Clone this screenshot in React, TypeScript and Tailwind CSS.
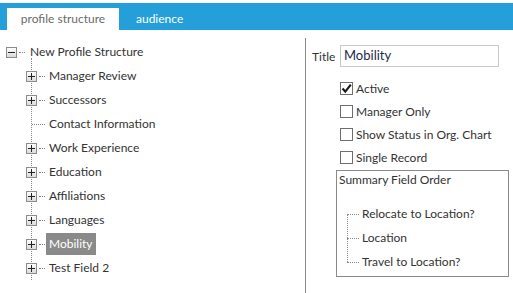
import React from "react";

type Node = { label: string; expandable: boolean; selected?: boolean };

const CHILDREN: Node[] = [
  { label: "Manager Review", expandable: true },
  { label: "Successors", expandable: true },
  { label: "Contact Information", expandable: false },
  { label: "Work Experience", expandable: true },
  { label: "Education", expandable: true },
  { label: "Affiliations", expandable: true },
  { label: "Languages", expandable: true },
  { label: "Mobility", expandable: true, selected: true },
  { label: "Test Field 2", expandable: true },
];

const OPTIONS = [
  { label: "Active", checked: true },
  { label: "Manager Only", checked: false },
  { label: "Show Status in Org. Chart", checked: false },
  { label: "Single Record", checked: false },
];

const SUMMARY = ["Relocate to Location?", "Location", "Travel to Location?"];

function ToggleBox({ open }: { open?: boolean }) {
  return (
    <span className="flex h-[11px] w-[11px] shrink-0 items-center justify-center border border-[#8c8c8c] bg-gradient-to-b from-white to-[#d9d9d9]">
      <svg width="7" height="7" viewBox="0 0 7 7">
        <rect x="0" y="3" width="7" height="1" fill="#222" />
        {!open && <rect x="3" y="0" width="1" height="7" fill="#222" />}
      </svg>
    </span>
  );
}

function Checkbox({ checked }: { checked: boolean }) {
  return (
    <span className="flex h-[13px] w-[13px] shrink-0 items-center justify-center border border-[#6e6e6e] bg-white">
      {checked && (
        <svg width="11" height="11" viewBox="0 0 11 11">
          <path d="M1.5 5.5 L4.3 8.6 L9.8 1.6" fill="none" stroke="#1a1a1a" strokeWidth="2.2" />
        </svg>
      )}
    </span>
  );
}

export default function App() {
  return (
    <div
      className="h-[293px] w-[513px] overflow-hidden bg-white text-[12px] text-[#333]"
      style={{ fontFamily: "Lato, 'Noto Sans', sans-serif" }}
    >
      {/* Tabs */}
      <div className="mt-[3px] flex h-[27px] items-end bg-[#259fd9] pl-[7px]">
        <div className="flex h-[22px] w-[112px] items-center justify-center bg-white text-[#6b6b6b]">
          profile structure
        </div>
        <div className="flex h-[22px] items-center pl-[17px] text-white">audience</div>
      </div>

      <div className="flex">
        {/* Tree */}
        <div className="w-[305px] pt-[10px]">
          <div className="flex h-6 items-center pl-[6px]">
            <ToggleBox open />
            <span className="ml-[2px] w-[6px] border-t border-dotted border-[#888]" />
            <span className="ml-[5px]">New Profile Structure</span>
          </div>
          <div className="relative">
            <span className="absolute left-[31px] top-[-6px] h-[222px] border-l border-dotted border-[#888]" />
            {CHILDREN.map((n) => (
              <div key={n.label} className="relative flex h-6 items-center pl-[26px]">
                {n.expandable ? (
                  <>
                    <ToggleBox />
                    <span className="ml-[2px] w-[6px] border-t border-dotted border-[#888]" />
                  </>
                ) : (
                  <span className="ml-[6px] w-[13px] border-t border-dotted border-[#888]" />
                )}
                <span
                  className={
                    n.selected
                      ? "ml-[1px] flex h-[22px] items-center bg-[#8a8a8a] px-[3px] text-white"
                      : "ml-[4px]"
                  }
                >
                  {n.label}
                </span>
              </div>
            ))}
          </div>
        </div>

        {/* Details */}
        <div className="mt-[8px] h-[255px] flex-1 border-l border-[#8a8a8a] pl-[6px] pt-[7px]">
          <div className="flex items-center">
            <span className="w-[28px] pt-[2px]">Title</span>
            <div className="flex h-[22px] w-[159px] items-center border border-[#c8c8c8] pl-[3px] text-[13px] text-[#1c2a4a]">
              Mobility
            </div>
          </div>
          <div className="ml-[28px] mt-[15px] flex flex-col gap-[10px]">
            {OPTIONS.map((o) => (
              <div key={o.label} className="flex h-[13px] items-center gap-[3px]">
                <Checkbox checked={o.checked} />
                <span>{o.label}</span>
              </div>
            ))}
          </div>
          <div className="ml-[24px] mt-[6px] h-[107px] w-[173px] border border-[#8a8a8a] pl-[2px] pt-[1px]">
            <div className="leading-4">Summary Field Order</div>
            <div className="relative ml-[8px] mt-[14px]">
              <span className="absolute left-0 top-[12px] h-[48px] border-l border-dotted border-[#888]" />
              {SUMMARY.map((s) => (
                <div key={s} className="flex h-6 items-center">
                  <span className="w-[12px] border-t border-dotted border-[#888]" />
                  <span className="ml-[3px]">{s}</span>
                </div>
              ))}
            </div>
          </div>
        </div>
      </div>
    </div>
  );
}
